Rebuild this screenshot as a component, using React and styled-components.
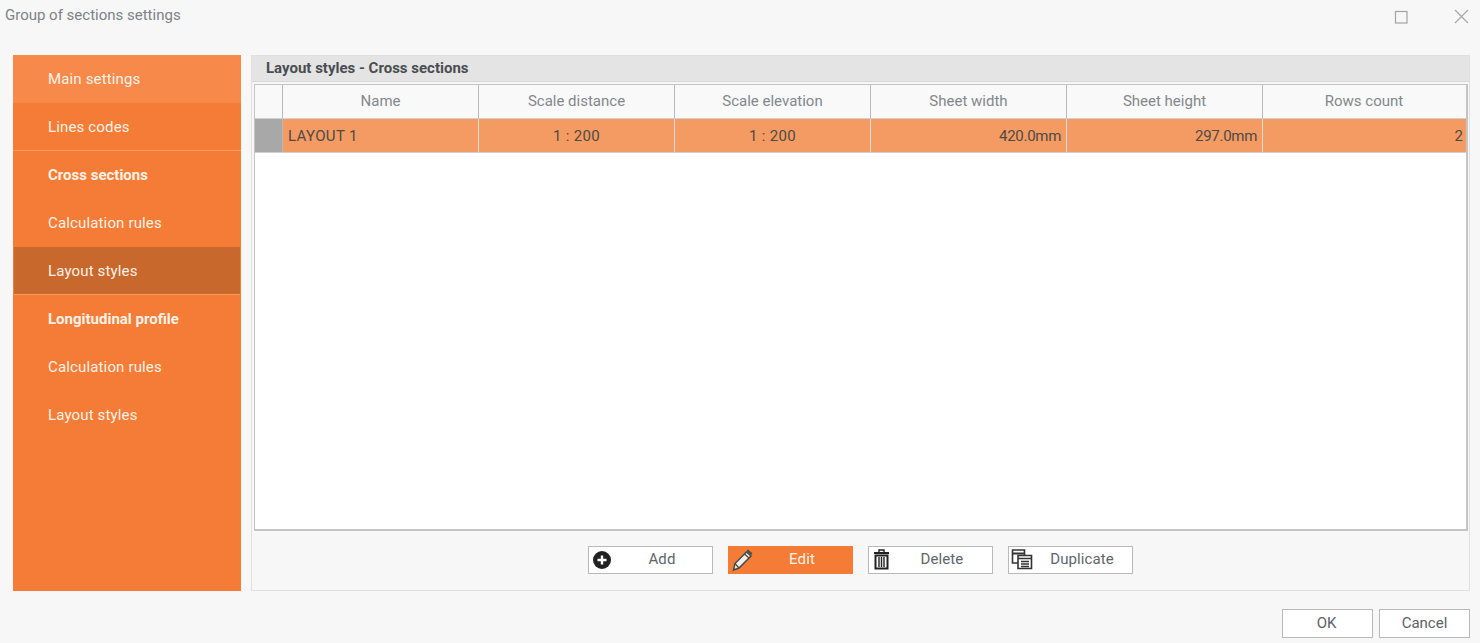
import React from "react";
import styled, { createGlobalStyle } from "styled-components";

const GlobalStyle = createGlobalStyle`
  html, body {
    margin: 0;
    padding: 0;
    height: 100%;
    background: #f7f7f7;
    font-family: Roboto, "Liberation Sans", sans-serif;
  }
`;

const Dialog = styled.div`
  width: 1480px;
  height: 643px;
  display: flex;
  flex-direction: column;
  background: #f7f7f7;
  overflow: hidden;
`;

const TitleBar = styled.div`
  height: 55px;
  flex: none;
  display: flex;
  align-items: flex-start;
  justify-content: space-between;
  padding: 6px 11px 0 5px;
  box-sizing: border-box;
`;

const Title = styled.div`
  font-size: 15px;
  line-height: 18px;
  color: #7d8288;
`;

const WindowButtons = styled.div`
  display: flex;
  align-items: center;
  gap: 46px;
  padding-top: 3px;
  svg {
    display: block;
  }
`;

const Body = styled.div`
  height: 536px;
  flex: none;
  display: flex;
  gap: 10px;
  padding: 0 10px 0 13px;
`;

const Sidebar = styled.nav`
  width: 228px;
  flex: none;
  background: #f57c36;
  display: flex;
  flex-direction: column;
`;

const NavItem = styled.div`
  height: 48px;
  flex: none;
  box-sizing: border-box;
  display: flex;
  align-items: center;
  padding-left: ${(props) => (props.$active ? "34px" : "35px")};
  font-size: 15px;
  letter-spacing: ${(props) => (props.$bold ? "0" : "0.15px")};
  font-weight: ${(props) => (props.$bold ? 700 : 400)};
  color: #fff2e8;
  background: ${(props) =>
    props.$active ? "#c9682c" : props.$light ? "#f7894a" : "transparent"};
  border-bottom: 1px solid
    ${(props) => (props.$divider ? "#f99a63" : "transparent")};
  margin: ${(props) => (props.$active ? "0 1px" : "0")};
`;

const Panel = styled.section`
  flex: 1;
  display: flex;
  flex-direction: column;
  border: 1px solid #e0e0e0;
  box-sizing: border-box;
`;

const PanelHeading = styled.div`
  height: 26px;
  flex: none;
  box-sizing: border-box;
  background: #e4e4e4;
  padding-left: 14px;
  font-size: 15px;
  font-weight: 700;
  line-height: 25px;
  color: #4a4d50;
  border-bottom: 1px solid #d6d6d6;
`;

const TableBox = styled.div`
  height: 447px;
  flex: none;
  margin: 2px 1px 0 2px;
  box-sizing: border-box;
  background: #fff;
  border: 1px solid #c4c4c4;
  border-right: 2px solid #c4c4c4;
  border-bottom: 2px solid #c4c4c4;
  display: flex;
  flex-direction: column;
`;

const GridRow = styled.div`
  height: 34px;
  flex: none;
  display: grid;
  grid-template-columns: 28px repeat(5, 196px) 1fr;
  box-sizing: border-box;
  border-bottom: 1px solid #d0d0d0;
  background: ${(props) => (props.$selected ? "#f49b63" : "#f9f9f9")};
`;

const Marker = styled.div`
  background: ${(props) => (props.$selected ? "#a8a8a8" : "#f9f9f9")};
  border-right: 1px solid #b9b9b9;
`;

const HeadCell = styled.div`
  display: flex;
  align-items: center;
  justify-content: center;
  padding-bottom: 2px;
  font-size: 15px;
  color: #83888d;
  border-right: 1px solid ${(props) => (props.$last ? "transparent" : "#b9b9b9")};
`;

const Cell = styled.div`
  display: flex;
  align-items: center;
  justify-content: ${(props) => props.$align || "flex-start"};
  padding: 0 ${(props) => (props.$last ? "2px" : "5px")} 0 5px;
  font-size: 15px;
  letter-spacing: ${(props) => props.$spacing || "0"};
  color: #4f4a46;
  border-right: 1px solid ${(props) => (props.$last ? "transparent" : "#d9d9d9")};
`;

const ActionBar = styled.div`
  flex: 1;
  display: flex;
  align-items: flex-start;
  justify-content: center;
  gap: 15px;
  padding-top: 15px;
`;

const ActionButton = styled.button`
  position: relative;
  width: 125px;
  height: 28px;
  padding: 0 0 2px 23px;
  box-sizing: border-box;
  font-family: inherit;
  font-size: 15px;
  letter-spacing: 0.1px;
  color: ${(props) => (props.$primary ? "#fff2e8" : "#60656b")};
  background: ${(props) => (props.$primary ? "#f57c36" : "#fff")};
  border: 1px solid ${(props) => (props.$primary ? "#f57c36" : "#b9b9b9")};
`;

const IconSlot = styled.span`
  position: absolute;
  left: 2px;
  top: 1px;
  width: 24px;
  height: 24px;
  display: block;
  svg {
    display: block;
  }
`;

const Footer = styled.div`
  flex: 1;
  display: flex;
  justify-content: flex-end;
  align-items: flex-start;
  gap: 6px;
  padding: 18px 10px 0 0;
`;

const FooterButton = styled.button`
  width: 91px;
  height: 29px;
  padding: 0 ${(props) => props.$nudge || 0}px 2px 0;
  box-sizing: border-box;
  font-family: inherit;
  font-size: 15px;
  color: #5c6167;
  background: #fff;
  border: 1px solid #b9b9b9;
`;

const MaximizeIcon = () => (
  <svg width="14" height="14" viewBox="0 0 14 14" fill="none">
    <rect x="1.500" y="1.500" width="11.500" height="11.500" stroke="#a3a3a3" strokeWidth="1.200" />
  </svg>
);

const CloseIcon = () => (
  <svg width="15" height="15" viewBox="0 0 15 15" fill="none">
    <path d="M1 1l13 13M14 1L1 14" stroke="#a8a8a8" strokeWidth="1.200" />
  </svg>
);

const PlusIcon = () => (
  <svg width="24" height="24" viewBox="0 0 24 24">
    <circle cx="11" cy="12" r="9" fill="#222" />
    <path d="M11 7.500v9M6.500 12h9" stroke="#fff" strokeWidth="2.400" />
  </svg>
);

const PencilIcon = () => (
  <svg width="24" height="24" viewBox="0 0 24 24" fill="none">
    <path d="M4 15.500 15.500 4l4.500 4L8 20l-5.500 2z" fill="#f3efea" stroke="#4a4a4a" strokeWidth="1.500" />
    <path d="M13.500 6 18 10M4 15.500 8 20" stroke="#4a4a4a" strokeWidth="1.300" />
    <path d="M15.500 3 17 1.500l4.500 4L20 7z" fill="#4a4a4a" />
  </svg>
);

const TrashIcon = () => (
  <svg width="24" height="24" viewBox="1 1 24 24" fill="none">
    <path d="M4 6h15" stroke="#222" strokeWidth="2" />
    <path d="M9 5V3h5v2" stroke="#222" strokeWidth="1.400" />
    <path d="M5.500 8.500h12v13h-12z" stroke="#222" strokeWidth="2" />
    <path d="M9 10v10M11.500 10v10M14 10v10" stroke="#222" strokeWidth="1.400" />
  </svg>
);

const CopyIcon = () => (
  <svg width="24" height="24" viewBox="1 1 24 24" fill="none">
    <path d="M8 16H2.500V3h12v5" stroke="#333" strokeWidth="1.600" />
    <path d="M2.500 6.500h12" stroke="#333" strokeWidth="2" />
    <path d="M8 8.500h13.500v13H8z" fill="#fff" stroke="#333" strokeWidth="1.600" />
    <path d="M8 11.500h13.500M11 14.500h8M11 17h8M11 19.500h8" stroke="#333" strokeWidth="1.400" />
  </svg>
);

const navItems = [
  { label: "Main settings", light: true },
  { label: "Lines codes", divider: true },
  { label: "Cross sections", bold: true },
  { label: "Calculation rules" },
  { label: "Layout styles", active: true, divider: true },
  { label: "Longitudinal profile", bold: true },
  { label: "Calculation rules" },
  { label: "Layout styles" },
];

const columns = ["Name", "Scale distance", "Scale elevation", "Sheet width", "Sheet height", "Rows count"];

const cells = [
  { text: "LAYOUT 1", spacing: "0.35px" },
  { text: "1 : 200", align: "center", spacing: "0.3px" },
  { text: "1 : 200", align: "center", spacing: "0.3px" },
  { text: "420.0mm", align: "flex-end", spacing: "-0.3px" },
  { text: "297.0mm", align: "flex-end", spacing: "-0.3px" },
  { text: "2", align: "flex-end" },
];

const actions = [
  { label: "Add", icon: <PlusIcon /> },
  { label: "Edit", icon: <PencilIcon />, primary: true },
  { label: "Delete", icon: <TrashIcon /> },
  { label: "Duplicate", icon: <CopyIcon /> },
];

const App = () => (
  <>
    <GlobalStyle />
    <Dialog>
      <TitleBar>
        <Title>Group of sections settings</Title>
        <WindowButtons>
          <MaximizeIcon />
          <CloseIcon />
        </WindowButtons>
      </TitleBar>
      <Body>
        <Sidebar>
          {navItems.map((item, i) => (
            <NavItem
              key={i}
              $bold={item.bold}
              $active={item.active}
              $light={item.light}
              $divider={item.divider}
            >
              {item.label}
            </NavItem>
          ))}
        </Sidebar>
        <Panel>
          <PanelHeading>Layout styles - Cross sections</PanelHeading>
          <TableBox>
            <GridRow>
              <Marker />
              {columns.map((name, i) => (
                <HeadCell key={name} $last={i === columns.length - 1}>
                  {name}
                </HeadCell>
              ))}
            </GridRow>
            <GridRow $selected>
              <Marker $selected />
              {cells.map((cell, i) => (
                <Cell
                  key={i}
                  $align={cell.align}
                  $spacing={cell.spacing}
                  $last={i === cells.length - 1}
                >
                  {cell.text}
                </Cell>
              ))}
            </GridRow>
          </TableBox>
          <ActionBar>
            {actions.map((action) => (
              <ActionButton key={action.label} $primary={action.primary}>
                <IconSlot>{action.icon}</IconSlot>
                {action.label}
              </ActionButton>
            ))}
          </ActionBar>
        </Panel>
      </Body>
      <Footer>
        <FooterButton $nudge={2}>OK</FooterButton>
        <FooterButton>Cancel</FooterButton>
      </Footer>
    </Dialog>
  </>
);

export default App;
